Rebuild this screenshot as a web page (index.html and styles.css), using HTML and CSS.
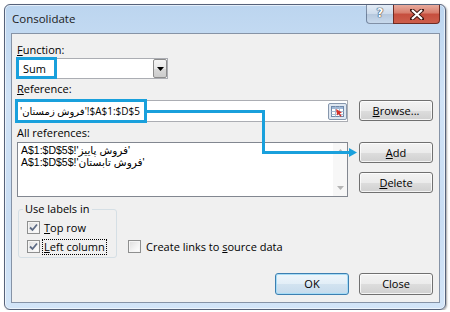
FILE: index.html
```html
<!doctype html>
<html lang="en">
<head>
	<meta charset="UTF-8">
	<title>Consolidate</title>
	<link rel="stylesheet" href="styles.css">
</head>
<body>
	<div class="window">
		<div class="titlebar">
			<div class="title">Consolidate</div>
			<div class="caption">
				<div class="cap-help">?</div>
				<div class="cap-close">
					<svg width="14" height="11" viewBox="0 0 14 11"><path d="M2 1 L12 10 M12 1 L2 10" stroke="#3b1510" stroke-width="4" stroke-linecap="square"/><path d="M2 1 L12 10 M12 1 L2 10" stroke="#fff" stroke-width="2.2"/></svg>
				</div>
			</div>
		</div>
		<div class="client">
			<div class="lbl fn"><u>F</u>unction:</div>
			<div class="combo">
				<span class="combo-val">Sum</span>
				<span class="combo-btn"><svg width="7" height="4" viewBox="0 0 7 4"><path d="M0 0 H7 L3.5 4 Z" fill="#000"/></svg></span>
			</div>
			<div class="lbl ref-lbl"><u>R</u>eference:</div>
			<div class="row ref-row">
				<div class="refedit">
					<span class="ref-text">'فروش زمستان'!$A$1:$D$5</span>
					<svg class="picker" width="19" height="17" viewBox="0 0 19 17">
						<rect x="0.5" y="0.5" width="18" height="16" rx="1.5" fill="#dfe7f1" stroke="#8797ad"/>
						<rect x="3.5" y="3.5" width="12" height="10" fill="#fff" stroke="#6f88a9"/>
						<rect x="4" y="4" width="11" height="2" fill="#9db6d6"/>
						<path d="M3.5 8.5h12M3.5 11.5h12M7.5 3.5v10M11.5 3.5v10" stroke="#a9bbd1"/>
						<path d="M8 6 L14 9.5 L11.8 10.2 L13.6 13 L12.5 13.7 L10.7 11 L9.2 12.6 Z" fill="#d6312a"/>
					</svg>
				</div>
				<div class="btn"><u>B</u>rowse...</div>
			</div>
			<div class="lbl all-lbl">All references:</div>
			<div class="row list-row">
				<div class="list">
					<div class="items">
						<div class="item"><span dir="rtl">'فروش پاییز'!$A$1:$D$5</span></div>
						<div class="item"><span dir="rtl">'فروش تابستان'!$A$1:$D$5</span></div>
					</div>
					<div class="vscroll">
						<svg width="7" height="4" viewBox="0 0 7 4"><path d="M0 4 H7 L3.5 0 Z" fill="#b5b5b5"/></svg>
						<svg width="7" height="4" viewBox="0 0 7 4"><path d="M0 0 H7 L3.5 4 Z" fill="#b5b5b5"/></svg>
					</div>
				</div>
				<div class="side">
					<div class="btn"><u>A</u>dd</div>
					<div class="btn del"><u>D</u>elete</div>
				</div>
			</div>
			<div class="row opts">
				<fieldset class="group">
					<legend>Use labels in</legend>
					<div class="check">
						<span class="box"><svg width="11" height="11" viewBox="0 0 11 11"><path d="M2 5.5 L4.5 8 L9 2.5" fill="none" stroke="#5d6b85" stroke-width="1.8"/></svg></span>
						<span class="text"><u>T</u>op row</span>
					</div>
					<div class="check">
						<span class="box"><svg width="11" height="11" viewBox="0 0 11 11"><path d="M2 5.5 L4.5 8 L9 2.5" fill="none" stroke="#5d6b85" stroke-width="1.8"/></svg></span>
						<span class="text focus"><u>L</u>eft column</span>
					</div>
				</fieldset>
				<div class="check links">
					<span class="box"></span>
					<span class="text">Create links to <u>s</u>ource data</span>
				</div>
			</div>
			<div class="footer">
				<div class="btn big ok">OK</div>
				<div class="btn big">Close</div>
			</div>
		</div>
	</div>

	<svg class="marks" width="450" height="312" viewBox="0 0 450 312">
		<rect x="17.5" y="58.5" width="38" height="19" fill="none" stroke="#19a0dc" stroke-width="3"/>
		<rect x="16.5" y="100.5" width="129" height="21" fill="none" stroke="#19a0dc" stroke-width="3"/>
		<path d="M147 111.5 H263.5 V152.5 H350" fill="none" stroke="#19a0dc" stroke-width="3"/>
		<path d="M349 148 L357 152.5 L349 157 Z" fill="#19a0dc"/>
	</svg>
</body>
</html>
```

FILE: styles.css
```css
body {
	margin: 0;
	background: #fff;
	font-family: "Open Sans", "DejaVu Sans", sans-serif;
	font-size: 11px;
	color: #000;
}

u { text-decoration: underline; text-underline-offset: 1px; }

.window {
	margin: 4px 0 0 4px;
	width: 442px;
	height: 306px;
	box-sizing: border-box;
	border: 1px solid #56627a;
	border-radius: 6px;
	padding: 0 5px 6px 6px;
	display: flex;
	flex-direction: column;
	background: linear-gradient(180deg, #bcd5ef 0%, #d0e3f7 30%, #c9ddf3 70%, #d3e5f8 100%);
	box-shadow: inset 0 0 0 1px rgba(255,255,255,.6), 1px 1px 2px rgba(0,0,0,.35);
}

.titlebar {
	height: 28px;
	display: flex;
	justify-content: space-between;
}
.title {
	margin-left: 1px;
	font-size: 11.5px;
	line-height: 28px;
	color: #1b1b1b;
}
.caption { display: flex; height: 19px; }
.cap-help {
	width: 27px;
	box-sizing: border-box;
	border: 1px solid rgba(50,70,100,.55);
	border-top: 0;
	border-right: 0;
	border-radius: 0 0 0 4px;
	background: linear-gradient(180deg, #e3ecf6 0%, #cddbeb 50%, #b6c8dd 51%, #c8d9ec 100%);
	text-align: center;
	font-family: "DejaVu Sans", sans-serif;
	font-weight: bold;
	font-size: 12px;
	line-height: 17px;
	color: #fff;
	text-shadow: 0 0 1px #2c3a4c, 0 0 1px #2c3a4c, 0 0 1px #2c3a4c;
}
.cap-close {
	width: 47px;
	box-sizing: border-box;
	border: 1px solid #6e2b23;
	border-top: 0;
	border-radius: 0 0 4px 0;
	background: linear-gradient(180deg, #e9ab9d 0%, #d77c6b 45%, #c64e3e 50%, #cd5e4b 100%);
	display: flex;
	align-items: center;
	justify-content: center;
}

.client {
	flex: 1;
	border: 1px solid #8693a6;
	background: #f0f0f0;
	padding: 0 6px 0 5px;
}

.lbl { line-height: 14px; height: 14px; }
.fn { margin-top: 9px; }
.ref-lbl { margin-top: 3px; }
.all-lbl { margin-top: 4px; }

.combo {
	margin-top: 1px;
	width: 151px;
	height: 21px;
	box-sizing: border-box;
	border: 1px solid #abadb3;
	background: #fff;
	display: flex;
	justify-content: space-between;
}
.combo-val { padding-left: 5px; line-height: 19px; }
.combo-btn {
	width: 14px;
	box-sizing: border-box;
	border: 1px solid #8c8c8c;
	border-radius: 2px;
	background: linear-gradient(180deg, #f4f4f4 0%, #e8e8e8 50%, #d9d9d9 51%, #cccccc 100%);
	display: flex;
	align-items: center;
	justify-content: center;
}

.row { display: flex; }
.ref-row { margin-top: 4px; align-items: flex-start; }
.refedit {
	width: 331px;
	height: 22px;
	box-sizing: border-box;
	border: 1px solid #abadb3;
	background: #fff;
	display: flex;
	align-items: center;
	justify-content: space-between;
}
.ref-text { padding-left: 2px; font-size: 10px; }

.btn {
	width: 74px;
	height: 21px;
	box-sizing: border-box;
	margin-left: 11px;
	border: 1px solid #707070;
	border-radius: 3px;
	background: linear-gradient(180deg, #f3f3f3 0%, #ebebeb 50%, #dddddd 51%, #d0d0d0 100%);
	box-shadow: inset 0 0 0 1px rgba(255,255,255,.75);
	text-align: center;
	line-height: 19px;
}

.list-row { margin-top: 2px; }
.list {
	width: 331px;
	height: 55px;
	box-sizing: border-box;
	border: 1px solid #828790;
	background: #fff;
	display: flex;
}
.items { flex: 1; padding: 1px 3px; }
.item {
	line-height: 12px;
	height: 12px;
	font-family: "Liberation Sans", "DejaVu Sans", sans-serif;
	font-size: 10.5px;
}
.vscroll {
	width: 14px;
	background: #f7f7f7;
	display: flex;
	flex-direction: column;
	justify-content: space-between;
	align-items: center;
	padding: 6px 0 6px;
}
.side { display: flex; flex-direction: column; }
.del { margin-top: 9px; }

.opts { margin-top: 5px; align-items: flex-end; }
.group {
	margin: 0 0 0 1px;
	width: 99px;
	box-sizing: border-box;
	padding: 2px 0 1px 0;
	border: 1px solid #d5dfe5;
	border-radius: 3px;
	min-inline-size: 0;
}
.group legend {
	margin-left: 4px;
	padding: 0 2px;
	line-height: 14px;
}
.check {
	height: 19px;
	display: flex;
	align-items: center;
	padding-left: 8px;
}
.box {
	width: 13px;
	height: 13px;
	box-sizing: border-box;
	border: 1px solid #8e8f8f;
	background: linear-gradient(135deg, #dcdcdc 0%, #f4f4f4 60%, #fff 100%);
	box-shadow: inset 0 0 0 1px #f5f5f5;
	display: flex;
	align-items: center;
	justify-content: center;
}
.check .text {
	margin-left: 2px;
	padding: 0 1px;
	border: 1px solid transparent;
	line-height: 14px;
}
.check .focus { border: 1px dotted #000; }
.links { margin: 0 0 2px 11px; padding-left: 0; }
.links .text { margin-left: 3px; }

.footer {
	margin-top: 15px;
	display: flex;
	justify-content: flex-end;
}
.big { height: 22px; line-height: 20px; margin-left: 10px; }
.ok {
	border-color: #3c7fb1;
	box-shadow: inset 0 0 0 1px #a7dcf6;
	background: linear-gradient(180deg, #eef6fb 0%, #e2eef7 50%, #d2e3f0 51%, #c6dbec 100%);
}

.marks {
	position: absolute;
	left: 0;
	top: 0;
	pointer-events: none;
}
```
